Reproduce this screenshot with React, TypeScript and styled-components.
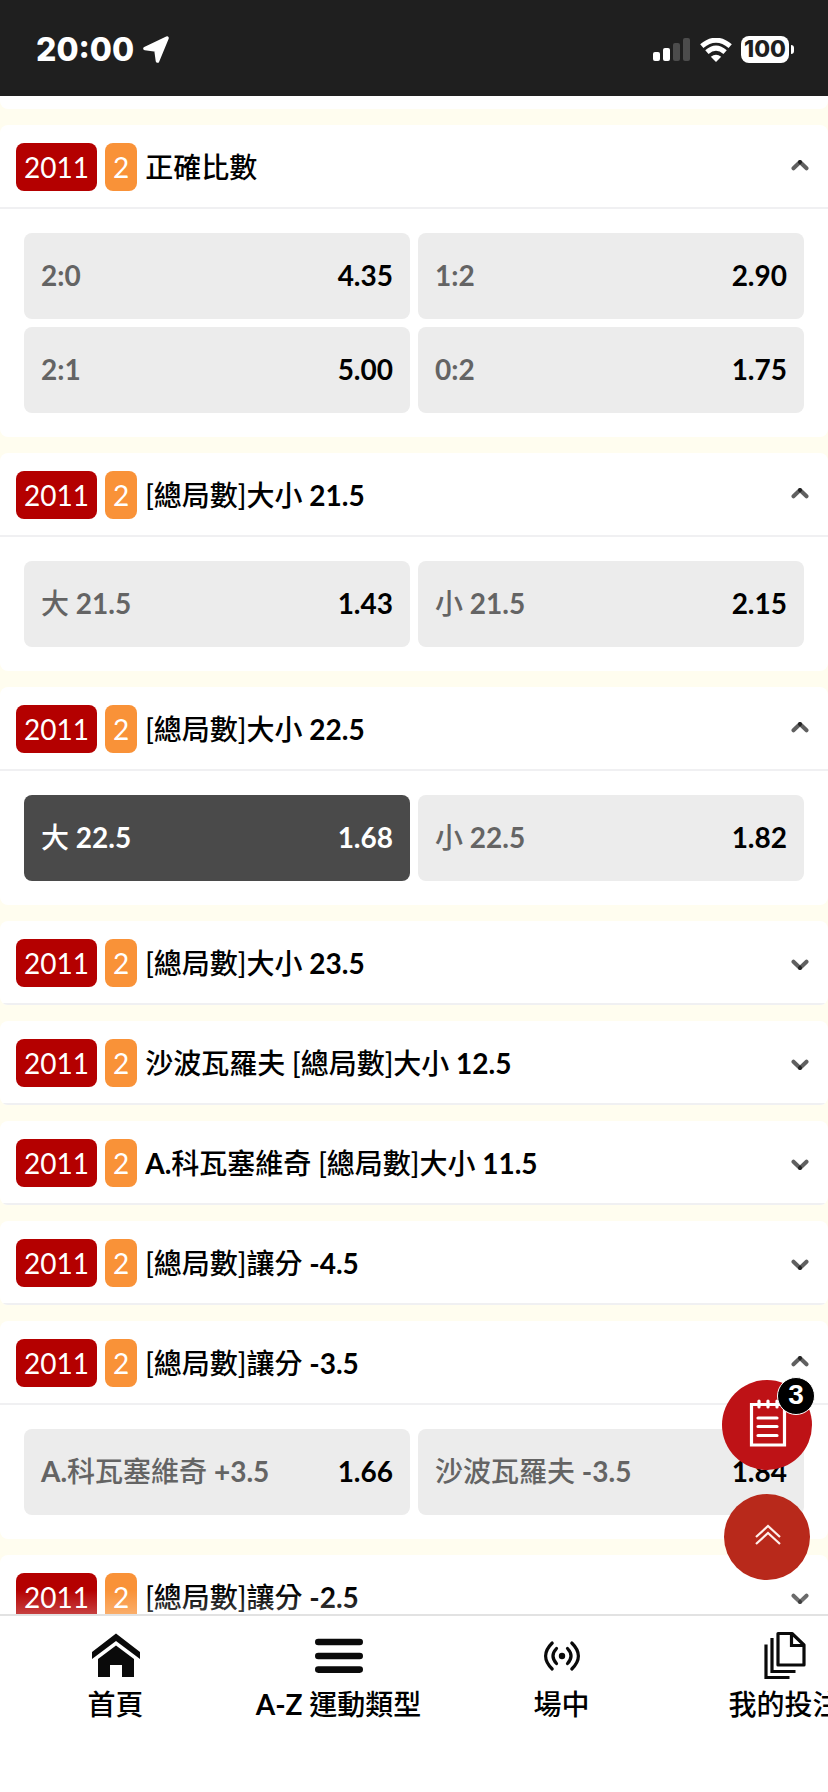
import React, { useState } from "react";
import styled, { createGlobalStyle, css } from "styled-components";

const GlobalStyle = createGlobalStyle`
  *, *::before, *::after { box-sizing: border-box; }
  html, body { margin: 0; padding: 0; }
  body {
    background: #fff;
    color: #000;
    font-family: Lato, "Noto Sans CJK TC", sans-serif;
    font-size: 28px;
    line-height: 32px;
  }
  button { font: inherit; color: inherit; border: 0; background: none; padding: 0; margin: 0; cursor: pointer; }
`;

const Screen = styled.div`
  display: flex;
  flex-direction: column;
  height: 100vh;
  overflow: hidden;
`;

const StatusBar = styled.header`
  flex: none;
  display: flex;
  align-items: center;
  justify-content: space-between;
  height: 96px;
  padding: 3px 34px 0 36px;
  background: #1f1f1f;
  color: #fff;
`;

const StatusGroup = styled.div`
  display: flex;
  align-items: center;
  gap: 9px;
`;

const Clock = styled.time`
  font-family: Inter, sans-serif;
  font-size: 32px;
  font-weight: 800;
`;

const BatteryBox = styled.div`
  display: flex;
  align-items: center;
  gap: 2px;
`;

const BatteryLevel = styled.span`
  width: 48px;
  height: 27px;
  border-radius: 8px;
  background: #fff;
  color: #1f1f1f;
  font-family: Inter, sans-serif;
  font-size: 23px;
  font-weight: 800;
  line-height: 27px;
  text-align: center;
`;

const BatteryTip = styled.span`
  width: 3px;
  height: 9px;
  border-radius: 0 4px 4px 0;
  background: #fff;
`;

const Content = styled.main`
  flex: 1;
  min-height: 0;
  position: relative;
  overflow: hidden;
`;

const MarketList = styled.div`
  display: flex;
  flex-direction: column;
  gap: 16px;
  height: 100%;
  overflow: hidden;
  background: #fffdef;
`;

const PreviousMarket = styled.div`
  flex: none;
  height: 13px;
  background: #fff;
  border-radius: 0 0 8px 8px;
`;

const Card = styled.section`
  flex: none;
  background: #fff;
  border-radius: 8px;
  overflow: hidden;
`;

const CardTitle = styled.h2`
  margin: 0;
  font-size: 28px;
  font-weight: 500;
`;

const CardToggle = styled.button`
  display: flex;
  align-items: center;
  gap: 8px;
  width: 100%;
  padding: 18px 19px 16px 16px;
  border-bottom: 2px solid #f0f0f2;
  text-align: left;
`;

const Tag = styled.span<{ $tone: "red" | "orange" }>`
  padding: 8px;
  border-radius: 8px;
  background: ${(p) => (p.$tone === "red" ? "#b40000" : "#f99238")};
  color: #fff;
  font-weight: 400;
`;

const MarketName = styled.span`
  flex: 1;
`;

const Latin = styled.span`
  font-weight: 700;
`;

const OddsGrid = styled.div`
  display: grid;
  grid-template-columns: 1fr 1fr;
  gap: 8px;
  padding: 24px;
`;

const OddsButton = styled.button<{ $selected: boolean }>`
  display: flex;
  align-items: center;
  justify-content: space-between;
  height: 86px;
  padding: 0 17px 2px;
  border-radius: 8px;
  background: #ececec;
  color: #646464;
  font-weight: 500;
  ${(p) =>
    p.$selected &&
    css`
      background: #4a4a4a;
      color: #fff;
    `}
`;

const Price = styled.span<{ $selected: boolean }>`
  color: ${(p) => (p.$selected ? "#fff" : "#000")};
  font-weight: 700;
`;

const BottomFade = styled.div`
  position: absolute;
  left: 0;
  right: 0;
  bottom: 0;
  height: 24px;
  background: linear-gradient(rgba(255, 255, 255, 0), rgba(255, 255, 255, 0.25));
  pointer-events: none;
`;

const FloatingActions = styled.div`
  position: absolute;
  right: 16px;
  bottom: 34px;
  display: flex;
  flex-direction: column;
  align-items: center;
  gap: 24px;
`;

const RoundButton = styled.button<{ $size: number; $color: string }>`
  position: relative;
  display: flex;
  align-items: center;
  justify-content: center;
  width: ${(p) => p.$size}px;
  height: ${(p) => p.$size}px;
  padding: 0 0 4px 2px;
  border-radius: 50%;
  background: ${(p) => p.$color};
`;

const CountBadge = styled.span`
  position: absolute;
  top: -3px;
  right: -3px;
  width: 38px;
  height: 38px;
  border: 1px solid #fff;
  border-radius: 50%;
  background: #000;
  color: #fff;
  font-family: "Liberation Sans", sans-serif;
  font-size: 28px;
  font-weight: 700;
  line-height: 34px;
`;

const BottomNav = styled.nav`
  flex: none;
  display: flex;
  height: 178px;
  padding: 15px 4px 0;
  border-top: 2px solid #e2e2e2;
  background: #fff;
  overflow: hidden;
`;

const NavItem = styled.a`
  flex: 0 0 223px;
  display: flex;
  flex-direction: column;
  align-items: center;
  gap: 9px;
  color: #000;
  font-weight: 500;
  text-decoration: none;
  white-space: nowrap;
`;

const LocationArrow = () => (
  <svg width="27" height="27" viewBox="0 0 27 27" aria-hidden="true">
    <path d="M24 2 L14.5 25 L13 14 L2 12.500 Z" fill="#fff" stroke="#fff" strokeWidth="3.600" strokeLinejoin="round" />
  </svg>
);

const Signal = () => (
  <svg width="38" height="24" viewBox="0 0 38 24" aria-hidden="true">
    <rect x="0" y="14" width="7" height="9" rx="2" fill="#fff" />
    <rect x="10" y="10" width="7" height="13" rx="2" fill="#fff" />
    <rect x="20" y="5" width="7" height="18" rx="2" fill="#4c4c4c" />
    <rect x="30" y="0" width="7" height="23" rx="2" fill="#4c4c4c" />
  </svg>
);

const Wifi = () => (
  <svg width="32" height="24" viewBox="0 0 32 24" aria-hidden="true">
    <g fill="none" stroke="#fff" strokeWidth="5">
      <path d="M1.800 8.200 Q16 -3.800 30.200 8.200" />
      <path d="M6.900 14.200 Q16 6.200 25.100 14.200" />
    </g>
    <path d="M10.800 18.800 Q16 14.600 21.200 18.800 L16 24 Z" fill="#fff" />
  </svg>
);

const Chevron = ({ open }: { open: boolean }) => (
  <svg width="18" height="16" viewBox="0 0 18 16" aria-hidden="true">
    <g transform={open ? undefined : "rotate(180 9 8)"} stroke="#000" strokeWidth="4" strokeLinecap="round">
      <line x1="9" y1="3" x2="2.500" y2="9.300" opacity="0.620" />
      <line x1="9" y1="3" x2="15.500" y2="9.300" opacity="0.620" />
    </g>
  </svg>
);

const BetSlip = () => (
  <svg width="38" height="48" viewBox="0 0 38 48" aria-hidden="true" fill="none" stroke="#fff" strokeWidth="3.200" strokeLinecap="round">
    <path d="M8 5.500 H2.500 V46 H35.500 V5.500 H30" strokeLinecap="butt" />
    <path d="M10 2 V8 M19 2 V8 M28 2 V8" />
    <path d="M6 5.500 H32" />
    <path d="M9 19 H28 M9 27.500 H28 M9 36.500 H28" />
  </svg>
);

const DoubleUp = () => (
  <svg width="26" height="24" viewBox="0 0 26 24" aria-hidden="true" fill="none" stroke="#fff0ec" strokeWidth="2.200">
    <path d="M1 14 L13 3 L25 14 M1 21 L13 10 L25 21" />
  </svg>
);

const HomeIcon = () => (
  <svg width="48" height="48" viewBox="0 0 48 48" aria-hidden="true" fill="#0a0a0a">
    <path d="M24 2.500 L48 21 V28 L24 10 L0 28 V21 Z" />
    <path d="M24 14.500 L42 28 V46 H30 V34 H18 V46 H6 V28 Z" />
  </svg>
);

const MenuIcon = () => (
  <svg width="48" height="48" viewBox="0 0 48 48" aria-hidden="true" stroke="#0a0a0a" strokeWidth="6.600" strokeLinecap="round">
    <path d="M3.300 11 H44.700 M3.300 25 H44.700 M3.300 38.600 H44.700" />
  </svg>
);

const LiveIcon = () => (
  <svg width="48" height="48" viewBox="0 0 48 48" aria-hidden="true" fill="none" stroke="#0a0a0a" strokeWidth="3.200" strokeLinecap="round">
    <path d="M14.200 12 Q1 25 14.200 38 M33.800 12 Q47 25 33.800 38" />
    <path d="M18.500 17.500 Q11.500 25 18.500 32.500 M29.500 17.500 Q36.500 25 29.500 32.500" />
    <circle cx="24" cy="25" r="3.200" fill="#0a0a0a" stroke="none" />
  </svg>
);

const BetsIcon = () => (
  <svg width="48" height="48" viewBox="0 0 48 48" aria-hidden="true" fill="none" stroke="#0a0a0a" strokeWidth="3.200">
    <path d="M17 2.500 H31 L43 14 V34 H17 Z" strokeLinejoin="round" />
    <path d="M30.500 2.500 V14.500 H43" />
    <path d="M11 7 V40.500 H34.500" />
    <path d="M5 13.500 V46.500 H28.500" />
  </svg>
);

/* Latin letters and digits are set heavier than the Chinese text beside them. */
function MixedText({ text }: { text: string }) {
  return (
    <>
      {text
        .split(/([\x20-\x5a\x61-\x7e]+)/)
        .filter(Boolean)
        .map((part, i) => (/^[\x20-\x5a\x61-\x7e]/.test(part) ? <Latin key={i}>{part}</Latin> : part))}
    </>
  );
}

type Outcome = { label: string; price: string; selected?: boolean };
type Market = { name: string; outcomes?: Outcome[] };

const markets: Market[] = [
  {
    name: "正確比數",
    outcomes: [
      { label: "2:0", price: "4.35" },
      { label: "1:2", price: "2.90" },
      { label: "2:1", price: "5.00" },
      { label: "0:2", price: "1.75" },
    ],
  },
  {
    name: "[總局數]大小 21.5",
    outcomes: [
      { label: "大 21.5", price: "1.43" },
      { label: "小 21.5", price: "2.15" },
    ],
  },
  {
    name: "[總局數]大小 22.5",
    outcomes: [
      { label: "大 22.5", price: "1.68", selected: true },
      { label: "小 22.5", price: "1.82" },
    ],
  },
  { name: "[總局數]大小 23.5" },
  { name: "沙波瓦羅夫 [總局數]大小 12.5" },
  { name: "A.科瓦塞維奇 [總局數]大小 11.5" },
  { name: "[總局數]讓分 -4.5" },
  {
    name: "[總局數]讓分 -3.5",
    outcomes: [
      { label: "A.科瓦塞維奇 +3.5", price: "1.66" },
      { label: "沙波瓦羅夫 -3.5", price: "1.84" },
    ],
  },
  { name: "[總局數]讓分 -2.5" },
];

function MarketCard({ market }: { market: Market }) {
  const [open, setOpen] = useState(Boolean(market.outcomes));
  return (
    <Card>
      <CardTitle>
        <CardToggle type="button" aria-expanded={open} onClick={() => setOpen(!open)}>
          <Tag $tone="red">2011</Tag>
          <Tag $tone="orange">2</Tag>
          <MarketName>
            <MixedText text={market.name} />
          </MarketName>
          <Chevron open={open} />
        </CardToggle>
      </CardTitle>
      {open && market.outcomes && (
        <OddsGrid>
          {market.outcomes.map((o) => (
            <OddsButton key={o.label} type="button" aria-pressed={Boolean(o.selected)} $selected={Boolean(o.selected)}>
              <span>
                <MixedText text={o.label} />
              </span>
              <Price $selected={Boolean(o.selected)}>{o.price}</Price>
            </OddsButton>
          ))}
        </OddsGrid>
      )}
    </Card>
  );
}

const navItems = [
  { href: "#home", label: "首頁", Icon: HomeIcon },
  { href: "#sports", label: "A-Z 運動類型", Icon: MenuIcon },
  { href: "#live", label: "場中", Icon: LiveIcon },
  { href: "#bets", label: "我的投注", Icon: BetsIcon },
];

export default function App() {
  return (
    <>
      <GlobalStyle />
      <Screen>
        <StatusBar>
          <StatusGroup>
            <Clock>20:00</Clock>
            <LocationArrow />
          </StatusGroup>
          <StatusGroup>
            <Signal />
            <Wifi />
            <BatteryBox>
              <BatteryLevel>100</BatteryLevel>
              <BatteryTip />
            </BatteryBox>
          </StatusGroup>
        </StatusBar>
        <Content>
          <MarketList>
            <PreviousMarket />
            {markets.map((m) => (
              <MarketCard key={m.name} market={m} />
            ))}
          </MarketList>
          <BottomFade />
          <FloatingActions>
            <RoundButton type="button" aria-label="投注單" $size={90} $color="#be1216">
              <BetSlip />
              <CountBadge>3</CountBadge>
            </RoundButton>
            <RoundButton type="button" aria-label="回到頂部" $size={86} $color="#b8291b">
              <DoubleUp />
            </RoundButton>
          </FloatingActions>
        </Content>
        <BottomNav>
          {navItems.map(({ href, label, Icon }) => (
            <NavItem key={href} href={href}>
              <Icon />
              <span>
                <MixedText text={label} />
              </span>
            </NavItem>
          ))}
        </BottomNav>
      </Screen>
    </>
  );
}
